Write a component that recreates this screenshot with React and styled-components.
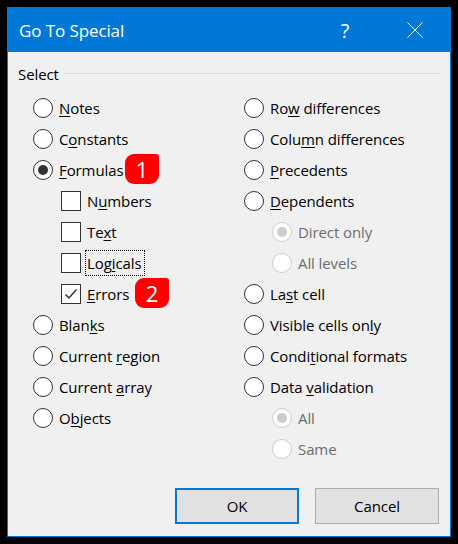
import React from 'react';
import styled, { createGlobalStyle } from 'styled-components';

const GlobalStyle = createGlobalStyle`
	html, body {
		margin: 0;
		padding: 0;
		background: #000;
	}
`;

const Page = styled.div`
	width: 458px;
	height: 544px;
	padding: 7px;
	box-sizing: border-box;
	background: #000;
	font-family: "Open Sans", "Noto Sans", sans-serif;
	font-size: 15px;
	letter-spacing: -0.1px;
	color: #000;
`;

const Dialog = styled.div`
	width: 444px;
	height: 530px;
	box-sizing: border-box;
	border: 1px solid #0078d7;
	background: #f0f0f0;
	display: flex;
	flex-direction: column;
`;

const TitleBar = styled.div`
	height: 44px;
	flex: none;
	background: #0078d7;
	color: #fff;
	display: flex;
	align-items: center;
	padding-left: 11px;
	font-size: 17px;
`;

const Title = styled.div`
	flex: 1;
`;

const HelpBtn = styled.div`
	width: 20px;
	text-align: center;
	font-size: 20px;
	margin-right: 52px;
`;

const CloseBtn = styled.svg`
	width: 16px;
	height: 16px;
	margin-right: 27px;
`;

const Body = styled.div`
	flex: 1;
	padding: 12px 10px 12px 10px;
	display: flex;
	flex-direction: column;
`;

const GroupHead = styled.div`
	display: flex;
	align-items: center;
	gap: 6px;
	height: 20px;
`;

const GroupLine = styled.div`
	flex: 1;
	height: 1px;
	background: #dcdcdc;
	margin-top: -1px;
`;

const Columns = styled.div`
	display: grid;
	grid-template-columns: 211px 1fr;
	padding: 8px 0 0 15px;
`;

const Row = styled.div`
	position: relative;
	height: 31px;
	display: flex;
	align-items: center;
	padding-left: ${props => props.$indent || 0}px;
	color: ${props => (props.$disabled ? '#6d6d6d' : '#000')};
`;

const RadioDot = styled.div`
	width: 20px;
	height: 20px;
	flex: none;
	box-sizing: border-box;
	border-radius: 50%;
	background: #fff;
	border: 1px solid ${props => (props.$disabled ? '#cccccc' : '#333')};
	display: flex;
	align-items: center;
	justify-content: center;
	margin-right: 6px;

	&::after {
		content: '';
		display: ${props => (props.$checked ? 'block' : 'none')};
		width: 10px;
		height: 10px;
		border-radius: 50%;
		background: ${props => (props.$disabled ? '#cccccc' : '#333')};
	}
`;

const CheckBox = styled.div`
	width: 20px;
	height: 20px;
	flex: none;
	box-sizing: border-box;
	background: #fff;
	border: 1px solid #333;
	display: flex;
	align-items: center;
	justify-content: center;
	margin-right: 6px;
`;

const Label = styled.span`
	white-space: nowrap;
	${props => props.$focused && `
		outline: 1px dotted #000;
		padding: 2px 3px 2px 1px;
		margin-left: -1px;
	`}
`;

const Key = styled.span`
	text-decoration: underline;
	text-underline-offset: 2px;
`;

const Badge = styled.div`
	position: absolute;
	top: 0;
	left: ${props => props.$left}px;
	width: 34px;
	height: 30px;
	background: #ff0000;
	border-radius: 9px 3px 9px 9px;
	color: #fff;
	font-size: 22px;
	display: flex;
	align-items: center;
	justify-content: center;
`;

const Buttons = styled.div`
	margin-top: auto;
	display: flex;
	justify-content: flex-end;
	gap: 16px;
	padding-right: 1px;
`;

const Button = styled.div`
	width: 124px;
	height: 36px;
	box-sizing: border-box;
	background: #e1e1e1;
	border: ${props => (props.$primary ? '2px solid #0078d7' : '1px solid #adadad')};
	display: flex;
	align-items: center;
	justify-content: center;
`;

function withKey(text, key) {
	if (key === undefined) return text;
	return (
		<>
			{text.slice(0, key)}
			<Key>{text[key]}</Key>
			{text.slice(key + 1)}
		</>
	);
}

function Radio(props) {
	return (
		<Row $indent={props.indent} $disabled={props.disabled}>
			<RadioDot $checked={props.checked} $disabled={props.disabled} />
			<Label>{withKey(props.text, props.k)}</Label>
			{props.children}
		</Row>
	);
}

function Check(props) {
	return (
		<Row $indent={28}>
			<CheckBox>
				{props.checked && (
					<svg width="14" height="12" viewBox="0 0 14 12">
						<path d="M1.5 6.5 L5 10 L12.5 1.5" fill="none" stroke="#333" strokeWidth="1.5" />
					</svg>
				)}
			</CheckBox>
			<Label $focused={props.focused}>{withKey(props.text, props.k)}</Label>
			{props.children}
		</Row>
	);
}

export default function App() {
	return (
		<Page>
			<GlobalStyle />
			<Dialog>
				<TitleBar>
					<Title>Go To Special</Title>
					<HelpBtn>?</HelpBtn>
					<CloseBtn viewBox="0 0 16 16">
						<path d="M0.5 0.5 L15.5 15.5 M15.5 0.5 L0.5 15.5" stroke="#fff" strokeWidth="1" fill="none" />
					</CloseBtn>
				</TitleBar>
				<Body>
					<GroupHead>
						Select
						<GroupLine />
					</GroupHead>
					<Columns>
						<div>
							<Radio text="Notes" k={0} />
							<Radio text="Constants" k={1} />
							<Radio text="Formulas" k={0} checked>
								<Badge $left={92}>1</Badge>
							</Radio>
							<Check text="Numbers" k={1} />
							<Check text="Text" k={2} />
							<Check text="Logicals" k={3} focused />
							<Check text="Errors" k={0} checked>
								<Badge $left={102}>2</Badge>
							</Check>
							<Radio text="Blanks" k={4} />
							<Radio text="Current region" k={8} />
							<Radio text="Current array" k={8} />
							<Radio text="Objects" k={1} />
						</div>
						<div>
							<Radio text="Row differences" k={2} />
							<Radio text="Column differences" k={4} />
							<Radio text="Precedents" k={0} />
							<Radio text="Dependents" k={0} />
							<Radio text="Direct only" indent={28} disabled checked />
							<Radio text="All levels" indent={28} disabled />
							<Radio text="Last cell" k={2} />
							<Radio text="Visible cells only" k={16} />
							<Radio text="Conditional formats" k={5} />
							<Radio text="Data validation" k={5} />
							<Radio text="All" indent={28} disabled checked />
							<Radio text="Same" indent={28} disabled />
						</div>
					</Columns>
					<Buttons>
						<Button $primary>OK</Button>
						<Button>Cancel</Button>
					</Buttons>
				</Body>
			</Dialog>
		</Page>
	);
}
